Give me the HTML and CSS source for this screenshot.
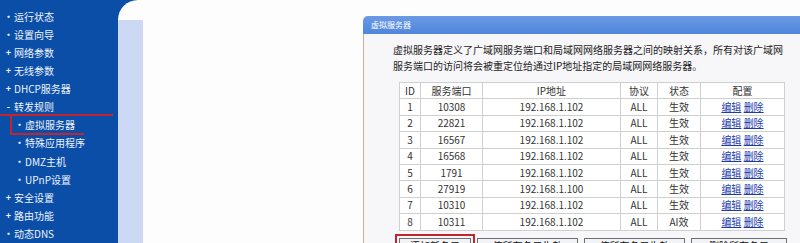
FILE: index.html
```html
<!DOCTYPE html>
<html lang="zh-CN">
<head>
  <meta charset="UTF-8" />
  <title>虚拟服务器</title>
  <link rel="stylesheet" href="styles.css">
</head>
<body>
  <div class="page">
    <nav class="menu">
      <ul>
        <li><span class="mark">•</span>运行状态</li>
        <li><span class="mark">•</span>设置向导</li>
        <li><span class="mark">+</span>网络参数</li>
        <li><span class="mark">+</span>无线参数</li>
        <li><span class="mark">+</span>DHCP服务器</li>
        <li><span class="mark">-</span>转发规则</li>
        <li class="sub marked"><span class="mark">•</span>虚拟服务器</li>
        <li class="sub"><span class="mark">•</span>特殊应用程序</li>
        <li class="sub"><span class="mark">•</span>DMZ主机</li>
        <li class="sub"><span class="mark">•</span>UPnP设置</li>
        <li><span class="mark">+</span>安全设置</li>
        <li><span class="mark">+</span>路由功能</li>
        <li><span class="mark">•</span>动态DNS</li>
      </ul>
    </nav>
    <div class="main">
      <div class="strip"></div>
      <section class="panel">
        <div class="panel-title">虚拟服务器</div>
        <div class="panel-body">
          <p class="desc">虚拟服务器定义了广域网服务端口和局域网网络服务器之间的映射关系，所有对该广域网<br>服务端口的访问将会被重定位给通过IP地址指定的局域网网络服务器。</p>
          <table class="rules">
            <colgroup>
              <col class="c-id"><col class="c-port"><col class="c-ip"><col class="c-proto"><col class="c-state"><col class="c-conf">
            </colgroup>
            <tr><th>ID</th><th>服务端口</th><th>IP地址</th><th>协议</th><th>状态</th><th>配置</th></tr>
            <tr><td>1</td><td>10308</td><td>192.168.1.102</td><td>ALL</td><td>生效</td><td><a href="#">编辑</a> <a href="#">删除</a></td></tr>
            <tr><td>2</td><td>22821</td><td>192.168.1.102</td><td>ALL</td><td>生效</td><td><a href="#">编辑</a> <a href="#">删除</a></td></tr>
            <tr><td>3</td><td>16567</td><td>192.168.1.102</td><td>ALL</td><td>生效</td><td><a href="#">编辑</a> <a href="#">删除</a></td></tr>
            <tr><td>4</td><td>16568</td><td>192.168.1.102</td><td>ALL</td><td>生效</td><td><a href="#">编辑</a> <a href="#">删除</a></td></tr>
            <tr><td>5</td><td>1791</td><td>192.168.1.102</td><td>ALL</td><td>生效</td><td><a href="#">编辑</a> <a href="#">删除</a></td></tr>
            <tr><td>6</td><td>27919</td><td>192.168.1.100</td><td>ALL</td><td>生效</td><td><a href="#">编辑</a> <a href="#">删除</a></td></tr>
            <tr><td>7</td><td>10310</td><td>192.168.1.102</td><td>ALL</td><td>生效</td><td><a href="#">编辑</a> <a href="#">删除</a></td></tr>
            <tr><td>8</td><td>10311</td><td>192.168.1.102</td><td>ALL</td><td>AI效</td><td><a href="#">编辑</a> <a href="#">删除</a></td></tr>
          </table>
          <div class="actions">
            <button class="btn add">添加新条目</button>
            <button class="btn wide">使所有条目生效</button>
            <button class="btn wide">使所有条目失效</button>
            <button class="btn">删除所有条目</button>
          </div>
        </div>
      </section>
    </div>
  </div>
</body>
</html>
```

FILE: styles.css
```css
body {
  margin: 0;
  font-family: "Noto Sans CJK SC", "DejaVu Sans", sans-serif;
  font-size: 10px;
  color: #222;
}
.page {
  display: flex;
  height: 243px;
  overflow: hidden;
  background: #0b4ea7;
}

/* left menu */
.menu { width: 118px; flex-shrink: 0; }
.menu ul {
  list-style: none;
  margin: 0;
  padding: 7px 0 0 0;
}
.menu li {
  display: flex;
  align-items: center;
  height: 18.13px;
  padding-left: 4px;
  color: #eef3fc;
  white-space: nowrap;
}
.menu li.sub { padding-left: 15px; }
.menu .mark {
  width: 9px;
  font-size: 9px;
  font-weight: bold;
  text-align: center;
  margin-right: 1px;
}
.menu li.marked { position: relative; }
.menu li.marked::before {
  content: "";
  position: absolute;
  left: 0;
  top: -2px;
  width: 113px;
  border-top: 2px solid #c4242c;
}
.menu li.marked::after {
  content: "";
  position: absolute;
  left: 10px;
  top: -2px;
  width: 72px;
  height: 19px;
  border-left: 2px solid #c4242c;
  border-bottom: 2px solid #c4242c;
}

/* main area */
.main {
  flex: 1;
  min-width: 0;
  display: flex;
  background: #fdfdfe;
  border-top-left-radius: 20px;
}
.strip {
  width: 25px;
  flex-shrink: 0;
  margin-top: 20px;
  background: #cdd8f5;
}
.panel {
  flex: 1;
  min-width: 0;
  margin: 16px 0 0 220px;
  display: flex;
  flex-direction: column;
}
.panel-title {
  height: 18px;
  line-height: 18px;
  padding-left: 8px;
  font-size: 8px;
  color: #fff;
  background: linear-gradient(#6c9ae6, #4f85da);
  border-top-left-radius: 5px;
  white-space: nowrap;
}
.panel-body {
  flex: 1;
  border-left: 1px solid #c9ae98;
  background: #f7f6f8;
  padding: 8px 0 0 29px;
}
.desc {
  margin: 0;
  line-height: 16px;
  color: #1c1c1c;
  white-space: nowrap;
}

/* rule table */
.rules {
  margin: 8px 0 0 6px;
  width: 385px;
  border-collapse: collapse;
  table-layout: fixed;
  background: #fff;
  border: 1px solid #bdbdbd;
}
.c-id { width: 21px; }
.c-port { width: 62px; }
.c-ip { width: 138px; }
.c-proto { width: 37px; }
.c-state { width: 43px; }
.c-conf { width: 84px; }
.rules th, .rules td {
  height: 15.4px;
  padding: 0;
  border: 1px solid #cfcfcf;
  text-align: center;
  font-weight: normal;
  color: #333;
  line-height: 14px;
  white-space: nowrap;
}
.rules a { color: #1b3cae; }

/* buttons */
.actions {
  display: flex;
  align-items: flex-start;
  gap: 6px;
  margin: 7px 0 0 6px;
}
.btn {
  padding: 0 0 6px;
  line-height: 14px;
  font-family: inherit;
  font-size: 10px;
  color: #111;
  background: #f2f3f6;
  border: 1px solid #6f6f6f;
  border-radius: 0;
}
.btn.add {
  width: 72px;
  outline: 2px solid #c4242c;
  outline-offset: 2px;
}
.btn.wide { width: 101px; }
.btn:last-child { width: 96px; }
```
